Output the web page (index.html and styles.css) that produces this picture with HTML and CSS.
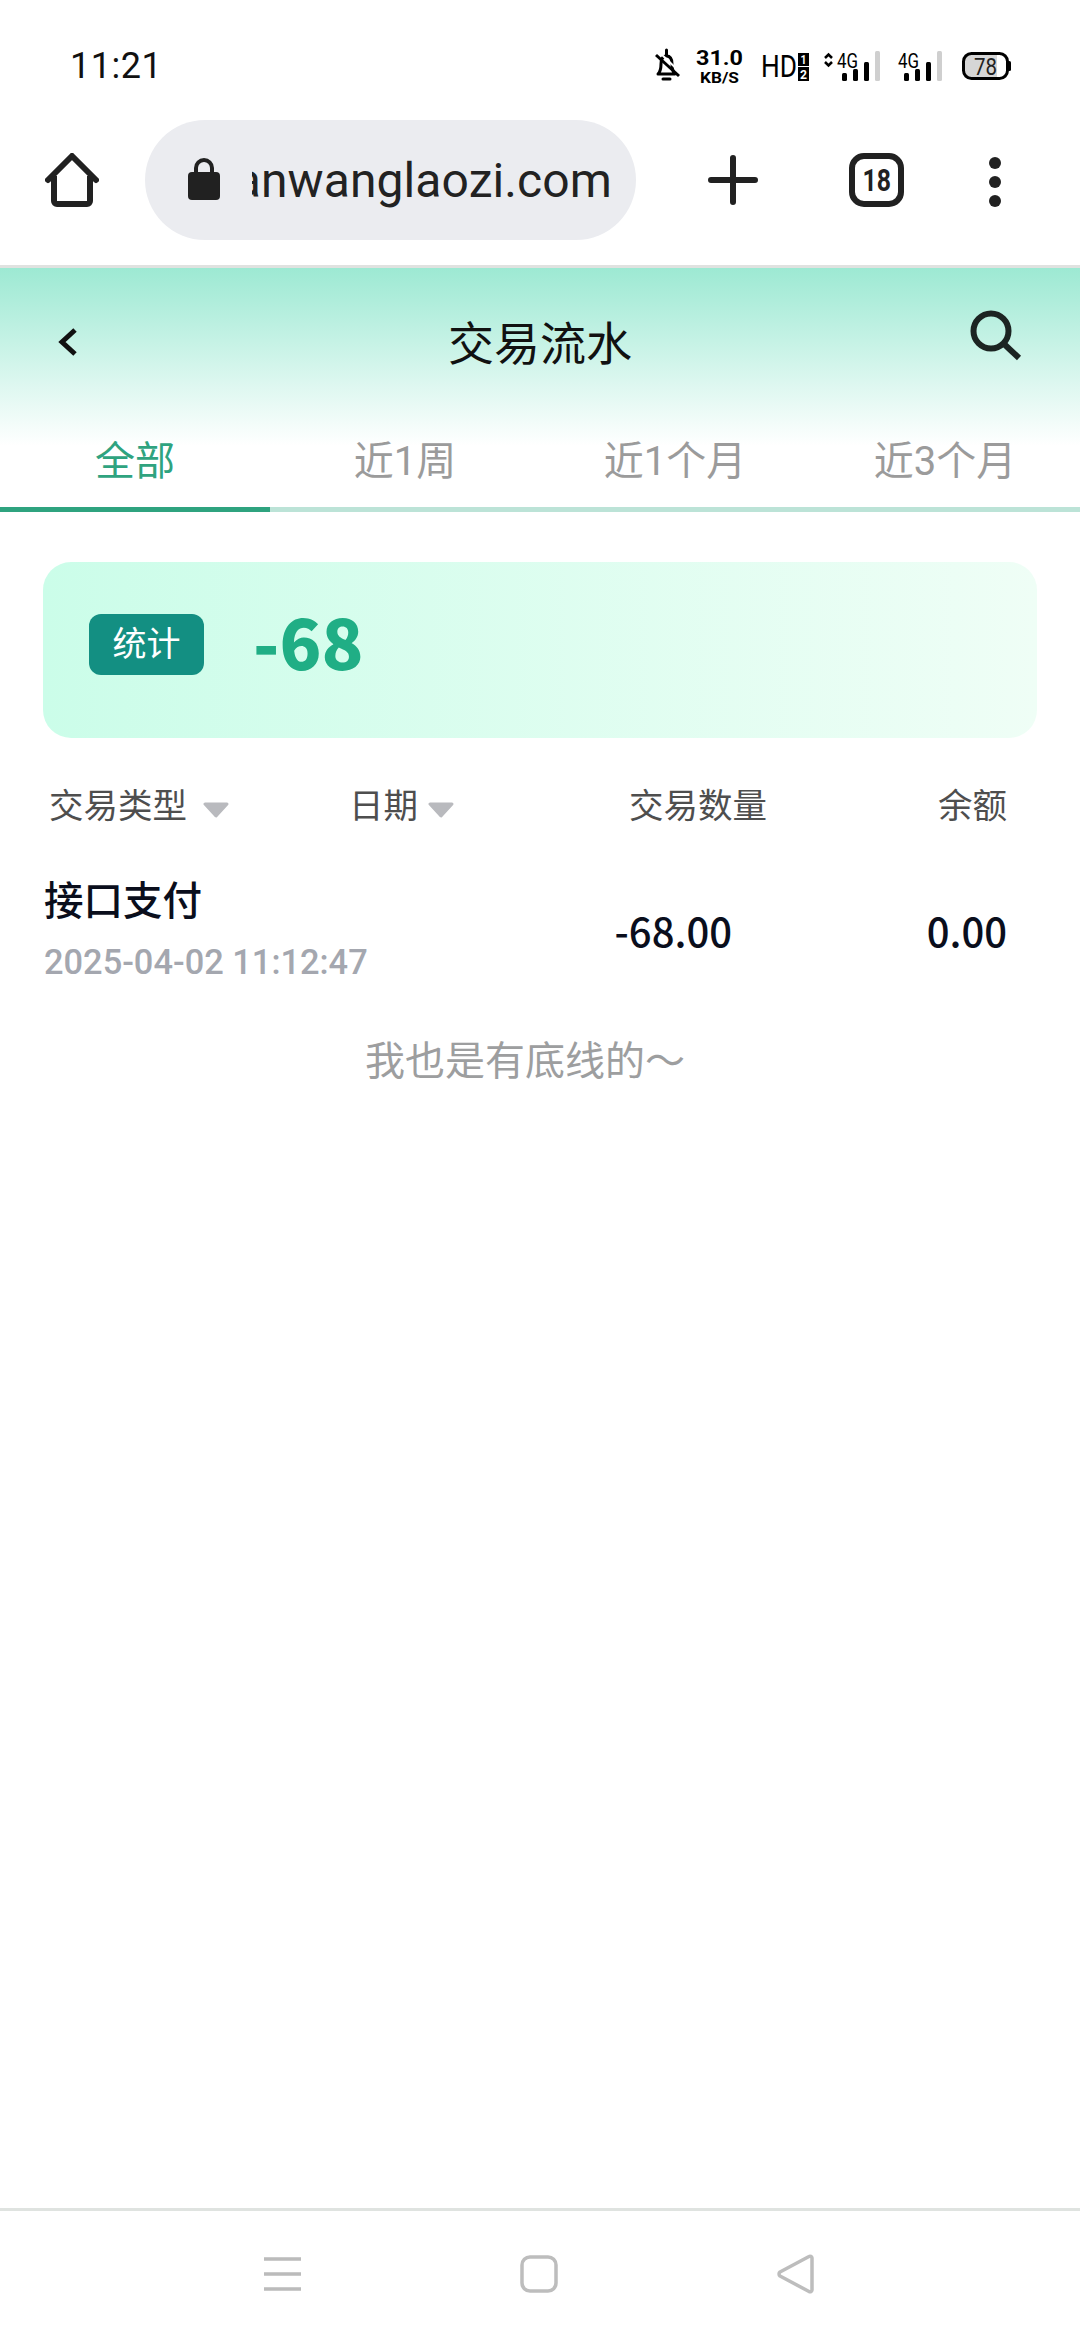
FILE: index.html
```html
<!DOCTYPE html>
<html lang="zh-CN">
<head>
    <meta charset="UTF-8">
    <meta name="viewport" content="width=device-width, initial-scale=1.0">
    <title>交易流水</title>
    <link rel="stylesheet" href="styles.css">
</head>
<body>
<div class="screen">

    <div class="status-bar">
        <span class="time">11:21</span>
        <svg class="status-icons" viewBox="650 46 365 40" width="365" height="40">
            <!-- muted bell -->
            <path d="M658 74c3-3 3-6 3-10 0-5 2-8 5.500-8s5.500 3 5.500 8c0 4 0 7 3 10z" fill="none" stroke="#000" stroke-width="3" stroke-linejoin="round"/>
            <path d="M666.500 50v5M663 79h7" stroke="#000" stroke-width="3" stroke-linecap="round"/>
            <path d="M656 55l23 21" stroke="#000" stroke-width="3"/>
            <path d="M660 53l21 20" stroke="#fff" stroke-width="2"/>
            <!-- speed -->
            <text class="st-bold" x="696" y="65" font-size="21" textLength="47" lengthAdjust="spacingAndGlyphs">31.0</text>
            <text class="st-bold" x="700" y="83" font-size="15" textLength="39" lengthAdjust="spacingAndGlyphs">KB/S</text>
            <!-- HD -->
            <text class="st-reg" x="761" y="77" font-size="32" textLength="36" lengthAdjust="spacingAndGlyphs">HD</text>
            <rect x="798" y="53" width="11" height="13" fill="#000"/>
            <rect x="798" y="67" width="11" height="14" fill="#000"/>
            <text class="st-white" x="800.500" y="64" font-size="12" textLength="6" lengthAdjust="spacingAndGlyphs">1</text>
            <text class="st-white" x="800" y="79" font-size="12" textLength="7" lengthAdjust="spacingAndGlyphs">2</text>
            <!-- sim 1 -->
            <path d="M825 58l3.500-3.500 3.500 3.500M825 62l3.500 3.500 3.500-3.500" fill="none" stroke="#000" stroke-width="2.500"/>
            <text class="st-reg" x="837" y="68" font-size="20" textLength="21" lengthAdjust="spacingAndGlyphs">4G</text>
            <rect x="842" y="73" width="5" height="8" rx="1.500"/>
            <rect x="853" y="69" width="5" height="12" rx="1.500"/>
            <rect x="864" y="62" width="5" height="19" rx="1.500"/>
            <rect x="875" y="51" width="5" height="30" rx="1.500" fill="#cfcfcf"/>
            <!-- sim 2 -->
            <text class="st-reg" x="898" y="68" font-size="20" textLength="21" lengthAdjust="spacingAndGlyphs">4G</text>
            <rect x="904" y="73" width="5" height="8" rx="1.500"/>
            <rect x="915" y="69" width="5" height="12" rx="1.500"/>
            <rect x="926" y="62" width="5" height="19" rx="1.500"/>
            <rect x="937" y="51" width="5" height="30" rx="1.500" fill="#cfcfcf"/>
            <!-- battery -->
            <path d="M970 54.500h27v23h-27a6 6 0 0 1-6-6v-11a6 6 0 0 1 6-6z" fill="#d6d6d6"/>
            <rect x="963.500" y="53.500" width="44" height="25" rx="8" fill="none" stroke="#000" stroke-width="3"/>
            <rect x="1008" y="61" width="3" height="10" rx="1.500"/>
            <text class="st-reg" x="974" y="75" font-size="24" textLength="23" lengthAdjust="spacingAndGlyphs" fill="#222">78</text>
        </svg>
    </div>

    <div class="toolbar">
        <svg class="home-icon" viewBox="0 0 54 54" width="54" height="54">
            <path d="M3 27L27 3l24 24" fill="none" stroke="#212121" stroke-width="6" stroke-linecap="round" stroke-linejoin="round"/>
            <path d="M9 23v25a3 3 0 0 0 3 3h30a3 3 0 0 0 3-3V23" fill="none" stroke="#212121" stroke-width="6"/>
        </svg>
        <div class="url-pill">
            <svg class="lock-icon" viewBox="0 0 32 42" width="32" height="42">
                <path d="M8 16v-6a8 8 0 0 1 16 0v6" fill="none" stroke="#212121" stroke-width="4"/>
                <rect x="0" y="14" width="32" height="28" rx="4" fill="#212121"/>
            </svg>
            <div class="url-text"><span>anwanglaozi.com</span></div>
        </div>
        <svg class="plus-icon" viewBox="0 0 50 50" width="50" height="50">
            <path d="M25 3v44M3 25h44" stroke="#212121" stroke-width="6" stroke-linecap="round"/>
        </svg>
        <div class="tab-count"><span>18</span></div>
        <div class="more-dots"><i></i><i></i><i></i></div>
    </div>

    <div class="page-head">
        <div class="title-bar">
            <svg class="back-icon" viewBox="0 0 20 30" width="20" height="30">
                <path d="M17 3L4 15l13 12" fill="none" stroke="#111" stroke-width="5"/>
            </svg>
            <h1>交易流水</h1>
            <svg class="search-icon" viewBox="0 0 52 52" width="52" height="52">
                <circle cx="21" cy="21" r="17.500" fill="none" stroke="#1c2422" stroke-width="6"/>
                <path d="M33 33l16 15" stroke="#1c2422" stroke-width="6"/>
            </svg>
        </div>
        <div class="tabs">
            <div class="tab active">全部</div>
            <div class="tab">近1周</div>
            <div class="tab">近1个月</div>
            <div class="tab">近3个月</div>
        </div>
    </div>

    <div class="content">
        <div class="stat-card">
            <span class="stat-tag">统计</span>
            <span class="stat-num">-68</span>
        </div>

        <div class="table-head">
            <div class="th th-type">交易类型<svg class="caret" viewBox="0 0 28 16" width="28" height="16"><path d="M3 2h22L14 14z" fill="#b9babe" stroke="#b9babe" stroke-width="3" stroke-linejoin="round"/></svg></div>
            <div class="th th-date">日期<svg class="caret" viewBox="0 0 28 16" width="28" height="16"><path d="M3 2h22L14 14z" fill="#b9babe" stroke="#b9babe" stroke-width="3" stroke-linejoin="round"/></svg></div>
            <div class="th th-qty">交易数量</div>
            <div class="th th-balance">余额</div>
        </div>

        <div class="record">
            <div class="record-info">
                <div class="record-name">接口支付</div>
                <div class="record-time">2025-04-02 11:12:47</div>
            </div>
            <div class="record-qty">-68.00</div>
            <div class="record-balance">0.00</div>
        </div>

        <p class="list-end">我也是有底线的～</p>
    </div>

    <div class="nav-bar">
        <svg viewBox="0 0 37 36" width="37" height="36">
            <path d="M0 3h37M0 18h37M0 33h37" stroke="#bbb" stroke-width="3.500"/>
        </svg>
        <svg viewBox="0 0 38 38" width="38" height="38">
            <rect x="2" y="2" width="34" height="34" rx="8" fill="none" stroke="#bdbdbd" stroke-width="3.500"/>
        </svg>
        <svg viewBox="0 0 38 42" width="38" height="42">
            <path d="M33 3.500a2 2 0 0 1 3 1.500v32a2 2 0 0 1-3 1.500L4 23a2.500 2.500 0 0 1 0-4z" fill="none" stroke="#bdbdbd" stroke-width="3.500" stroke-linejoin="round"/>
        </svg>
    </div>

</div>
</body>
</html>
```

FILE: styles.css
```css
* {
    box-sizing: border-box;
}

body {
    margin: 0;
    background: #fff;
    font-family: Roboto, "Noto Sans CJK SC", sans-serif;
}

.screen {
    width: 1080px;
    height: 2340px;
    display: flex;
    flex-direction: column;
    overflow: hidden;
}

/* status bar */
.status-bar {
    height: 120px;
    display: flex;
    justify-content: space-between;
    align-items: flex-start;
    padding: 46px 65px 0 70px;
}

.time {
    font-size: 36px;
    line-height: 40px;
    letter-spacing: 0.5px;
    color: #111;
}

.status-icons text {
    font-family: Roboto, sans-serif;
}

.st-bold {
    font-weight: 700;
}

.st-reg {
    font-weight: 400;
}

.st-white {
    font-weight: 700;
    fill: #fff;
}

/* browser toolbar */
.toolbar {
    height: 148px;
    display: flex;
    align-items: flex-start;
    border-bottom: 3px solid #e0e2e0;
    padding-left: 45px;
}

.home-icon {
    margin-top: 33px;
    flex: none;
}

.url-pill {
    width: 491px;
    height: 120px;
    margin-left: 46px;
    border-radius: 60px;
    background: #ebecf0;
    display: flex;
    align-items: center;
    padding-left: 43px;
    flex: none;
}

.lock-icon {
    flex: none;
    margin-top: -2px;
}

.url-text {
    width: 360px;
    margin: 2px 0 0 32px;
    display: flex;
    justify-content: flex-end;
    overflow: hidden;
    font-size: 48px;
    line-height: 60px;
    letter-spacing: 0.1px;
    color: #222;
    white-space: nowrap;
}

.plus-icon {
    margin: 35px 0 0 72px;
    flex: none;
}

.tab-count {
    width: 55px;
    height: 54px;
    margin: 33px 0 0 91px;
    border: 6px solid #212121;
    border-radius: 15px;
    display: flex;
    align-items: center;
    justify-content: center;
    font-size: 31px;
    font-weight: 700;
    color: #212121;
    flex: none;
}

.tab-count span {
    display: block;
    transform: scaleX(0.8);
}

.more-dots {
    margin: 37px 0 0 85px;
    display: flex;
    flex-direction: column;
    gap: 7px;
}

.more-dots i {
    display: block;
    width: 12px;
    height: 12px;
    border-radius: 50%;
    background: #212121;
}

/* page header */
.page-head {
    background: linear-gradient(#9de9d3, #fff) no-repeat;
    background-size: 100% 178px;
}

.title-bar {
    height: 170px;
    display: flex;
    align-items: flex-start;
    padding: 42px 58px 0 58px;
}

.title-bar h1 {
    flex: 1;
    margin: 1px 0 0 0;
    font-size: 46px;
    line-height: 66px;
    font-weight: 400;
    color: #111;
    text-align: center;
}

.back-icon {
    margin: 17px 32px 0 0;
}

.tabs {
    display: grid;
    grid-template-columns: repeat(4, 1fr);
    height: 74px;
    border-bottom: 5px solid #bce3d7;
}

.tab {
    text-align: center;
    font-size: 40px;
    line-height: 48px;
    color: #9b9b9b;
    margin-bottom: -5px;
}

.tab.active {
    color: #2fa37f;
    border-bottom: 5px solid #2fa37f;
}

/* content */
.content {
    flex: 1;
    padding-top: 50px;
}

.stat-card {
    width: 994px;
    height: 176px;
    margin-left: 43px;
    border-radius: 28px;
    background: linear-gradient(90deg, #cbfde9, #effef6);
    display: flex;
    align-items: flex-start;
    padding: 52px 0 0 46px;
}

.stat-tag {
    width: 115px;
    height: 61px;
    border-radius: 12px;
    background: #138f82;
    color: #fff;
    font-size: 34px;
    line-height: 61px;
    text-align: center;
}

.stat-num {
    margin: -2px 0 0 49px;
    font-family: "Noto Sans CJK SC", sans-serif;
    font-size: 69px;
    line-height: 56px;
    font-weight: 900;
    color: #20ae85;
}

.table-head {
    display: grid;
    grid-template-columns: 300px 271px 147px 240px;
    padding: 48px 0 0 49px;
    height: 139px;
}

.th {
    font-size: 34.5px;
    line-height: 40px;
    color: #4e4e4e;
    white-space: nowrap;
}

.caret {
    margin-left: 15px;
    vertical-align: 0;
}

.th-date .caret {
    margin-left: 9px;
}

.th-qty,
.th-balance {
    text-align: right;
}

.record {
    display: flex;
    align-items: center;
    padding-left: 44px;
}

.record-info {
    width: 560px;
}

.record-name {
    font-size: 39.5px;
    line-height: 50px;
    font-weight: 500;
    color: #0a0e1c;
}

.record-time {
    font-size: 34.4px;
    line-height: 40px;
    margin-top: 15px;
    font-weight: 500;
    color: #a4a7af;
}

.record-qty,
.record-balance {
    font-family: "Noto Sans CJK SC", sans-serif;
    font-size: 40px;
    line-height: 50px;
    font-weight: 500;
    color: #0a0e1c;
    text-align: right;
}

.record-qty {
    width: 128px;
}

.record-balance {
    width: 275px;
}

.list-end {
    margin: 55px 30px 0 0;
    text-align: center;
    font-size: 40px;
    line-height: 50px;
    color: #9d9e9f;
}

/* system nav */
.nav-bar {
    height: 132px;
    border-top: 3px solid #dfe3e0;
    display: flex;
    align-items: center;
    justify-content: space-between;
    padding: 0 266px 4px 264px;
}
```
